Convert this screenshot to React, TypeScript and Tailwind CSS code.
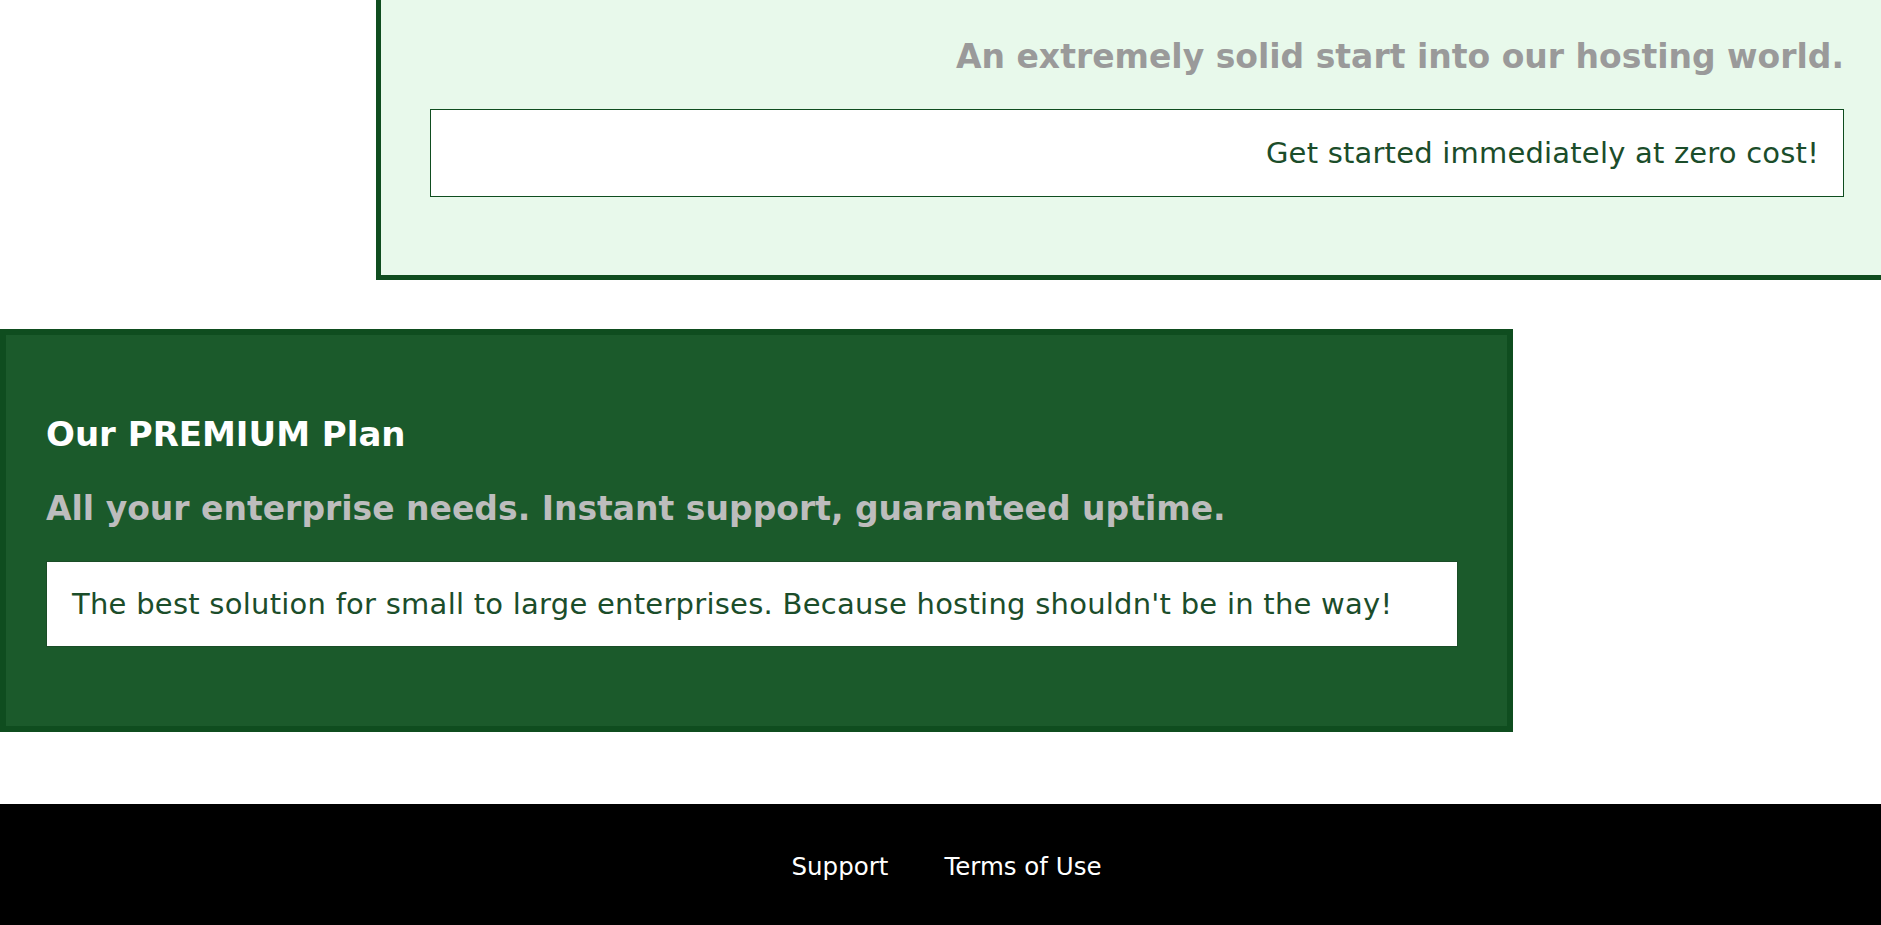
const PlanCard = () => (
  <section className="ml-[376px] border-l-[5px] border-b-[5px] border-[#0f4d1f] bg-[#e8f9eb] pt-[37px] pb-[78px] pl-[49px] pr-[37px]">
    <h3 className="text-right text-[33px] leading-[40px] font-bold text-[#9a9a9a]">
      An extremely solid start into our hosting world.
    </h3>
    <div className="mt-[32px] h-[88px] flex items-center justify-end border border-[#0f4d1f] bg-white pr-[24px] pt-[2px]">
      <p className="text-[29px] tracking-[0.2px] text-[#1b4d2a]">
        Get started immediately at zero cost!
      </p>
    </div>
  </section>
);

const PremiumCard = () => (
  <section className="mt-[49px] w-[1513px] border-[6px] border-[#0f4d1f] bg-[#1b5a2b] pt-[79px] pb-[79px] pl-[40px] pr-[49px]">
    <h2 className="text-[34px] leading-[40px] font-bold text-white">Our PREMIUM Plan</h2>
    <h3 className="mt-[35px] text-[33px] leading-[40px] font-bold text-[#bdbdbd]">
      All your enterprise needs. Instant support, guaranteed uptime.
    </h3>
    <div className="mt-[32px] h-[86px] flex items-center border border-[#1a4d27] bg-white pl-[25px] pt-[2px]">
      <p className="text-[29px] tracking-[0.25px] text-[#1b4d2a]">
        The best solution for small to large enterprises. Because hosting shouldn't be in the way!
      </p>
    </div>
  </section>
);

export default function App() {
  return (
    <div className="min-h-screen overflow-hidden bg-white font-['DejaVu_Sans',sans-serif]">
      <PlanCard />
      <PremiumCard />
      <footer className="mt-[72px] h-[121px] flex items-center justify-center gap-[56px] bg-black pt-[5px] pl-[12px] text-white text-[24.5px]">
        <a href="#">Support</a>
        <a href="#">Terms of Use</a>
      </footer>
    </div>
  );
}
